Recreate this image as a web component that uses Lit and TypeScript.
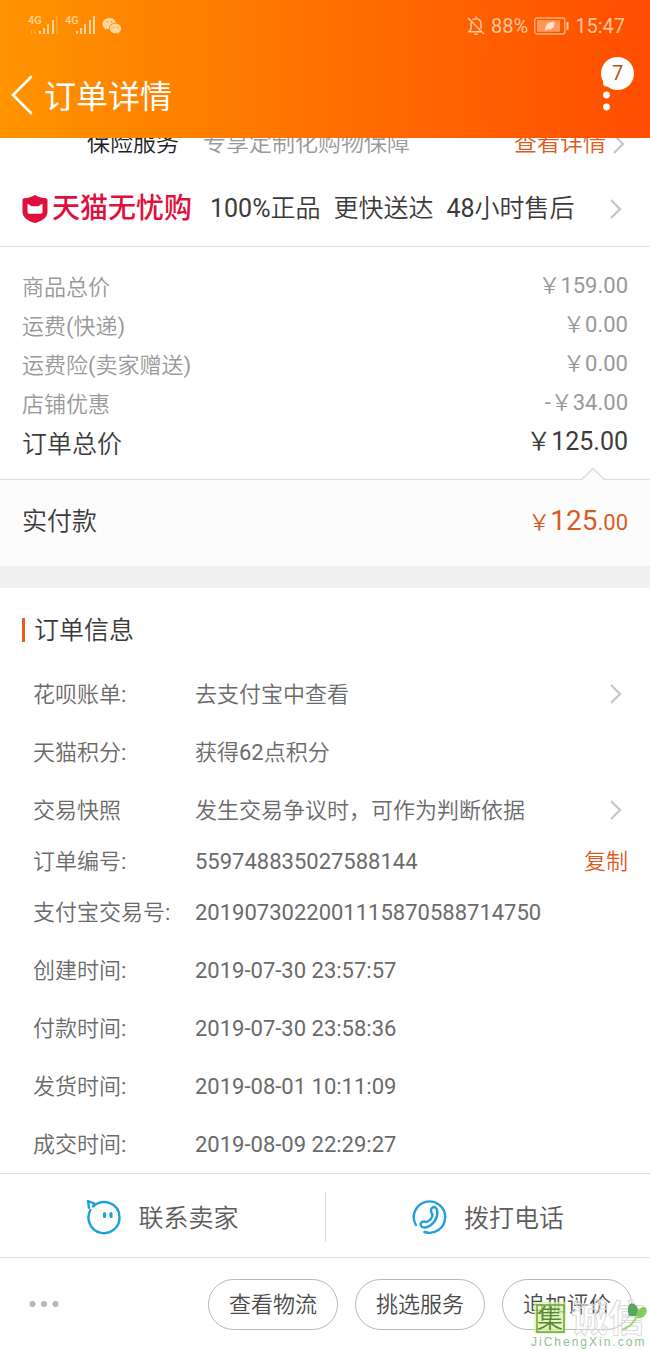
import { LitElement, html, css, svg, nothing } from "lit";
import { customElement } from "lit/decorators.js";

interface InfoRow {
  label: string;
  value: string;
  link?: boolean;
  copy?: boolean;
}

const PRICES = [
  ["商品总价", "￥159.00"],
  ["运费(快递)", "￥0.00"],
  ["运费险(卖家赠送)", "￥0.00"],
  ["店铺优惠", "-￥34.00"],
];

const INFO: InfoRow[] = [
  { label: "花呗账单:", value: "去支付宝中查看", link: true },
  { label: "天猫积分:", value: "获得62点积分" },
  { label: "交易快照", value: "发生交易争议时，可作为判断依据", link: true },
  { label: "订单编号:", value: "559748835027588144", copy: true },
  { label: "支付宝交易号:", value: "2019073022001115870588714750" },
  { label: "创建时间:", value: "2019-07-30 23:57:57" },
  { label: "付款时间:", value: "2019-07-30 23:58:36" },
  { label: "发货时间:", value: "2019-08-01 10:11:09" },
  { label: "成交时间:", value: "2019-08-09 22:29:27" },
];

const chevron = html`<svg class="chevron" width="14" height="22" viewBox="0 0 14 22" aria-hidden="true">
  <path d="M2 2 L11 11 L2 20" fill="none" stroke="#c8c8c8" stroke-width="2.400" />
</svg>`;

const signal = (dim: boolean) => html`<svg width="32" height="22" viewBox="0 0 32 22" aria-hidden="true">
  <text class="net" x="0" y="9">4G</text>
  ${dim ? svg`<path d="M3.500 15v4M2 17l1.500-2M6.500 15v4l1.500-2" stroke="#ffd49a" stroke-opacity=".4" fill="none" />` : nothing}
  <g fill="#ffd49a">
    <rect x="11" y="16" width="2" height="3" />
    <rect x="15" y="13" width="2" height="6" />
    <rect x="19" y="9" width="2" height="10" />
    <rect x="24" y="5" width="2" height="14" />
    <rect x="28" y="1" width="2" height="18" fill-opacity=${dim ? 0.25 : 1} />
  </g>
</svg>`;

@customElement("app-root")
export class AppRoot extends LitElement {
  static styles = css`
    :host {
      display: flex;
      flex-direction: column;
      position: relative;
      min-height: 100vh;
      background: #fff;
      color: #3a3a3a;
      font-family: Roboto, "Noto Sans CJK SC DemiLight", "Noto Sans CJK SC", sans-serif;
      font-size: 22px;
      font-weight: 400;
      line-height: 32px;
    }
    * {
      box-sizing: border-box;
    }
    button {
      margin: 0;
      padding: 0;
      border: 0;
      background: none;
      color: inherit;
      font: inherit;
      cursor: pointer;
    }
    a {
      color: inherit;
      text-decoration: none;
    }
    h1,
    h2,
    dl,
    dd {
      margin: 0;
      font-weight: inherit;
    }
    svg {
      display: block;
      flex: none;
    }

    .top {
      position: relative;
      z-index: 1;
      background: linear-gradient(to right, #ff9400, #ff4d00);
      color: #fff;
    }
    .status {
      display: flex;
      align-items: center;
      height: 52px;
      padding: 0 25px 0 28px;
      color: #ffc79c;
      font-size: 20px;
    }
    .signals {
      display: flex;
      align-items: center;
      gap: 5px;
      margin-right: auto;
    }
    .net {
      fill: #ffd49a;
      font-size: 11px;
      font-weight: 500;
    }
    .state {
      display: flex;
      align-items: center;
      gap: 6px;
    }
    .titlebar {
      display: flex;
      align-items: center;
      gap: 10px;
      height: 86px;
      padding: 0 10px;
    }
    .title {
      flex: 1;
      padding-top: 4px;
      font-family: Roboto, "Noto Sans CJK SC", sans-serif;
      font-size: 32px;
      line-height: 48px;
    }
    .more {
      position: relative;
      width: 46px;
      height: 60px;
    }
    .badge {
      position: absolute;
      top: -8px;
      right: 6px;
      width: 33px;
      height: 33px;
      border-radius: 50%;
      background: #fff;
      color: #b8501e;
      font-size: 20px;
      line-height: 33px;
      text-align: center;
    }

    .line {
      display: flex;
      align-items: center;
      padding: 2px 22px 0;
    }
    .chevron {
      margin: 0 5px 0 auto;
    }
    .insurance {
      height: 54px;
      margin-top: -22px;
      padding-left: 87px;
      font-size: 23px;
    }
    .insurance .desc {
      margin-left: 24px;
      color: #999;
    }
    .insurance .detail {
      margin-left: auto;
      color: #dc5a1e;
    }
    .insurance .chevron {
      margin: 0 2px 0 6px;
    }
    .strong {
      color: #1c2126;
    }
    .tmall {
      height: 77px;
      border-bottom: 1px solid #ddd;
      font-size: 25px;
    }
    .tmall .name {
      margin: 0 18px 0 4px;
      color: #e0103c;
      font-family: Roboto, "Noto Sans CJK SC", sans-serif;
      font-size: 28px;
      font-weight: 500;
    }
    .tmall .promise {
      margin-right: 13px;
      white-space: nowrap;
    }

    .prices {
      padding: 20px 22px 16px;
      color: #999;
    }
    .price {
      display: flex;
      align-items: center;
      justify-content: space-between;
      height: 39px;
    }
    .label {
      padding-top: 3px;
    }
    .figure {
      padding-bottom: 2px;
    }
    .total {
      height: 40px;
      color: #3c3c3c;
      font-size: 25px;
    }
    .paid {
      position: relative;
      justify-content: space-between;
      height: 87px;
      padding-bottom: 4px;
      border-top: 1px solid #ddd;
      background: #fcfcfc;
      font-size: 25px;
    }
    .notch {
      position: absolute;
      top: -13px;
      right: 45px;
    }
    .amount {
      color: #dc5a1e;
      font-size: 22px;
    }
    .amount .whole {
      font-size: 28px;
    }
    .band {
      height: 22px;
      background: #f0f0f0;
    }

    .heading {
      display: flex;
      align-items: center;
      gap: 9px;
      padding: 22px 22px 16px;
      font-size: 25px;
      line-height: 36px;
    }
    .heading::before {
      content: "";
      width: 3px;
      height: 24px;
      background: #e85c1e;
    }
    .row {
      display: flex;
      align-items: center;
      height: 58px;
      padding: 0 22px 0 33px;
      color: #6a6a6a;
    }
    .row.short {
      height: 44px;
    }
    .row dt,
    .row dd,
    .copy {
      padding-top: 2px;
    }
    .row dt {
      flex: none;
      width: 162px;
    }
    .row dd {
      white-space: nowrap;
    }
    .copy {
      margin-left: auto;
      color: #dc5a1e;
    }

    .bottom {
      margin-top: auto;
    }
    .contact {
      display: grid;
      grid-template-columns: 1fr 1fr;
      align-items: center;
      padding: 18px 0 15px;
      border-top: 1px solid #ddd;
      border-bottom: 1px solid #ddd;
      color: #5c5c5c;
    }
    .call {
      display: flex;
      align-items: center;
      justify-content: center;
      gap: 16px;
      height: 50px;
      font-size: 25px;
    }
    .call + .call {
      border-left: 1px solid #ddd;
    }
    .actions {
      display: flex;
      align-items: center;
      gap: 17px;
      height: 92px;
      padding: 0 18px 0 28px;
      color: #4a4a4a;
    }
    .dots {
      margin-right: auto;
    }
    .pill {
      width: 130px;
      height: 51px;
      padding-top: 2px;
      border: 1px solid #b8b8b8;
      border-radius: 26px;
    }

    .mark {
      position: absolute;
      right: 0;
      bottom: 0;
      pointer-events: none;
    }
    .mark-seal {
      fill: #55893a;
      font-size: 26px;
    }
    .mark-name {
      fill: #fff;
      fill-opacity: 0.3;
      stroke: #dcdcdc;
      font-family: "Noto Sans CJK SC", sans-serif;
      font-size: 37px;
      font-weight: 700;
    }
    .mark-site {
      fill: #8fbf8f;
      font-family: "Liberation Sans", sans-serif;
      font-size: 12px;
      letter-spacing: 2px;
    }
  `;

  render() {
    return html`
      <header class="top">
        <div class="status">
          <div class="signals">
            ${signal(true)} ${signal(false)}
            <svg width="20" height="18" viewBox="0 0 20 18" aria-hidden="true">
              <path fill="#ffd49a" d="M7.500 1C3.400 1 .5 3.600 .5 6.700c0 1.800 1 3.300 2.500 4.300l-.6 2 2.400-1.200c.8.200 1.500.3 2.300.3C6.900 8.300 10 5.800 13.900 5.800 13.200 3 10.600 1 7.500 1z" />
              <path fill="#ffd49a" d="M13.500 6.700c-3.300 0-5.800 2.100-5.800 4.800s2.500 4.800 5.800 4.800c.7 0 1.400-.1 2-.3l1.900 1-.5-1.700c1.400-.9 2.300-2.200 2.300-3.800 0-2.700-2.500-4.800-5.700-4.800z" />
              <g fill="#ff8500"><circle cx="5.200" cy="5" r=".7" /><circle cx="9.700" cy="5" r=".7" /><circle cx="11.600" cy="10.300" r=".6" /><circle cx="15.300" cy="10.300" r=".6" /></g>
            </svg>
          </div>
          <div class="state">
            <svg width="18" height="20" viewBox="0 0 18 20" fill="none" stroke="#ffc79c" stroke-width="1.600" aria-hidden="true">
              <path d="M1 2 L17 18" />
              <path d="M5.500 3.800C6.500 3 7.700 2.700 9 2.700c3.300 0 5 2.400 5 5.300v4.500M4 6.500V13l-2 2.700h12M9 .5v2.200M7.300 18.300h3.400" />
            </svg>
            <span>88%</span>
            <svg width="35" height="18" viewBox="0 0 35 18" aria-hidden="true">
              <rect x=".8" y="1" width="30" height="16" rx="2" fill="none" stroke="#ffb27c" stroke-width="1.300" />
              <rect x="3" y="3.200" width="23" height="11.600" fill="#ff9858" />
              <path d="M11.500 14 C10.500 7 15 5 20.500 4.500 C21 10.500 17.500 13.500 13.500 12.300z" fill="#ffe3cc" />
              <rect x="32.500" y="5" width="2" height="8" fill="#ffc79c" />
            </svg>
            <span>15:47</span>
          </div>
        </div>
        <div class="titlebar">
          <button class="back" aria-label="返回">
            <svg width="24" height="40" viewBox="0 0 24 40">
              <path d="M21 2 L3 20 L21 38" fill="none" stroke="#fff" stroke-width="2.600" stroke-linecap="round" />
            </svg>
          </button>
          <h1 class="title">订单详情</h1>
          <button class="more" aria-label="更多">
            <svg width="46" height="60" viewBox="0 0 46 60" fill="#fff">
              <circle cx="12.500" cy="18" r="3.400" /><circle cx="12.500" cy="30" r="3.400" /><circle cx="12.500" cy="42" r="3.400" />
            </svg>
            <span class="badge">7</span>
          </button>
        </div>
      </header>

      <main>
        <a class="line insurance" href="#insurance">
          <span class="strong">保险服务</span>
          <span class="desc">专享定制化购物保障</span>
          <span class="detail">查看详情</span>
          ${chevron}
        </a>
        <a class="line tmall" href="#tmall">
          <svg width="26" height="28" viewBox="0 0 26 28" aria-hidden="true">
            <path fill="#e0103c" d="M13 0C16 2 20 3 24 3.300Q25.500 3.500 25.500 5V17c0 5-5 9-12.500 11C5.500 26 .5 22 .5 17V5Q.5 3.500 2 3.300C6 3 10 2 13 0z" />
            <path fill="#fff" d="M5.500 9C7 8.800 8 10.500 9.500 11.200h7C18 10.500 19 8.800 20.500 9v7.500c0 1.600-.8 2.300-2.200 2.300H7.700c-1.400 0-2.200-.7-2.200-2.300z" />
          </svg>
          <span class="name">天猫无忧购</span>
          <span class="promise">100%正品</span>
          <span class="promise">更快送达</span>
          <span class="promise">48小时售后</span>
          ${chevron}
        </a>

        <section class="prices">
          ${PRICES.map(
            ([label, value]) =>
              html`<div class="price"><span class="label">${label}</span><span class="figure">${value}</span></div>`
          )}
          <div class="price total"><span class="label">订单总价</span><span class="figure">￥125.00</span></div>
        </section>
        <section class="line paid">
          <svg class="notch" width="24" height="14" viewBox="0 0 24 14" aria-hidden="true">
            <path d="M0 14 L12 1.500 L24 14z" fill="#fcfcfc" />
            <path d="M0 13 L12 1.500 L24 13" fill="none" stroke="#ddd" stroke-width="1.400" />
          </svg>
          <span>实付款</span>
          <span class="amount">￥<span class="whole">125</span>.00</span>
        </section>
        <div class="band"></div>

        <section>
          <h2 class="heading"><span class="label">订单信息</span></h2>
          <dl>
            ${INFO.map(
              (r) => html`<div class="row ${r.copy ? "short" : ""}">
                <dt>${r.label}</dt>
                <dd>${r.value}</dd>
                ${r.link ? chevron : nothing} ${r.copy ? html`<button class="copy">复制</button>` : nothing}
              </div>`
            )}
          </dl>
        </section>
      </main>

      <footer class="bottom">
        <div class="contact">
          <button class="call">
            <svg width="36" height="36" viewBox="0 0 36 36" fill="none" stroke="#1fa0dc" stroke-width="2.400" stroke-linecap="round" stroke-linejoin="round" aria-hidden="true">
              <path d="M3 8.800 L2 2 L8.500 4.600 L7 7.500 C17 -1.500 33.500 4 33.500 18.500 A15.500 15.500 0 1 1 4.500 11" />
              <path d="M18.500 14.500v3M25 14.500v3" stroke-width="3.200" />
            </svg>
            <span class="label">联系卖家</span>
          </button>
          <button class="call">
            <svg width="36" height="36" viewBox="0 0 36 36" fill="none" stroke="#1fa0dc" stroke-width="2.400" stroke-linecap="round" stroke-linejoin="round" aria-hidden="true">
              <path d="M3.900 26 A15.700 15.700 0 1 1 12.500 33" />
              <path d="M20.500 8.500 C22.500 7.300 25 9 25.300 12 C26 20 20 28 12.500 28.500 C9.500 28.700 8 26 9 24 C10.200 21.700 12.500 22.500 14.500 23 C18 21.500 20.300 18.500 20.500 15.500 C18.700 13.500 18.200 10 20.500 8.500z" />
            </svg>
            <span class="label">拨打电话</span>
          </button>
        </div>
        <div class="actions">
          <button class="dots" aria-label="更多操作">
            <svg width="32" height="8" viewBox="0 0 32 8" fill="#b8b8b8">
              <circle cx="4.500" cy="4" r="3" /><circle cx="16" cy="4" r="3" /><circle cx="27.500" cy="4" r="3" />
            </svg>
          </button>
          <button class="pill">查看物流</button>
          <button class="pill">挑选服务</button>
          <button class="pill">追加评价</button>
        </div>
      </footer>

      <svg class="mark" width="122" height="52" viewBox="0 0 122 52" aria-hidden="true">
        <rect x="6" y="4" width="32" height="32" fill="#d8f5a0" fill-opacity=".7" />
        <rect x="9" y="7" width="27" height="27" fill="none" stroke="#6f9f45" stroke-width="1.500" />
        <text class="mark-seal" x="9" y="30">集</text>
        <text class="mark-name" x="43" y="34">诚信</text>
        <path d="M101 18 C98 9 101 4 106 6 C110 8 111 13 109 18z" fill="#5aa55f" />
        <path d="M108 20 C108 11 115 7 118 10 C121 15 115 22 108 20z" fill="#8acb5c" />
        <path d="M109 18 C106 25 102 29 94 32" fill="none" stroke="#a5d67a" stroke-width="2" />
        <text class="mark-site" x="3" y="48">JiChengXin.com</text>
      </svg>
    `;
  }
}
